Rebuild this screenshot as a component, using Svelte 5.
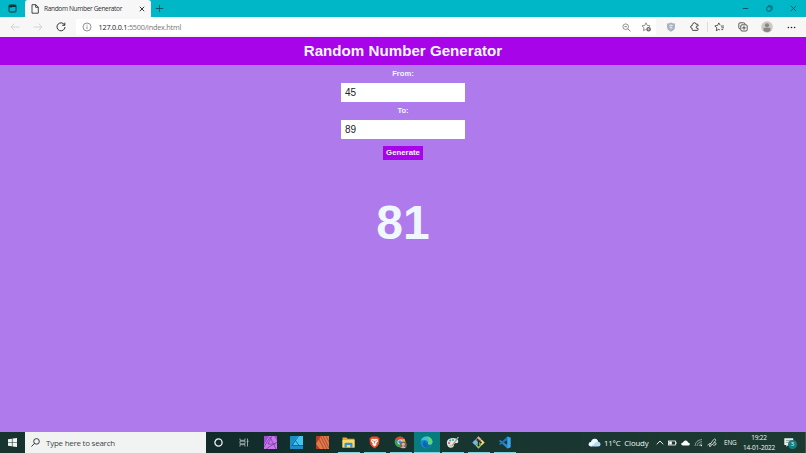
<script>
  let from = $state(45);
  let to = $state(89);
  let result = $state(81);

  const generate = () => {
    const a = Number(from);
    const b = Number(to);
    const min = Math.min(a, b);
    const max = Math.max(a, b);
    result = Math.floor(Math.random() * (max - min + 1)) + min;
  };

  const apps = [
    { name: 'cortana' },
    { name: 'tasks' },
    { name: 'photo' },
    { name: 'designer' },
    { name: 'publisher' },
    { name: 'files', open: true },
    { name: 'brave', open: true },
    { name: 'chrome', open: true },
    { name: 'edge', open: true, active: true },
    { name: 'paint', open: true },
    { name: 'git', open: true },
    { name: 'code', open: true }
  ];
</script>

<div class="screen">
  <div class="titlebar">
    <div class="workspace">
      <svg width="9" height="9" viewBox="0 0 9 9"><rect x="1" y="1" width="7" height="7" rx="1" fill="none" stroke="#06343a" /><path d="M1 2h7M3 3.5v-1" stroke="#06343a" stroke-width="2" /></svg>
    </div>
    <div class="tab">
      <svg width="8" height="10" viewBox="0 0 8 10"><path d="M1 .7h3.8L7.3 3.2v6H1zM4.7.7v2.6h2.6" fill="none" stroke="#333" stroke-width=".9" /></svg>
      <span class="tab-title">Random Number Generator</span>
      <svg width="6" height="6" viewBox="0 0 6 6"><path d="M.8.8l4.4 4.4M5.2.8L.8 5.2" stroke="#222" stroke-width=".9" /></svg>
    </div>
    <div class="new-tab">
      <svg width="9" height="9" viewBox="0 0 9 9"><path d="M4.5.8v7.4M.8 4.5h7.4" stroke="#075159" stroke-width=".9" /></svg>
    </div>
    <div class="window-buttons">
      <span><svg width="7" height="7" viewBox="0 0 7 7"><path d="M.8 3.5h5.4" stroke="#075159" stroke-width=".9" /></svg></span>
      <span><svg width="7" height="7" viewBox="0 0 7 7"><rect x=".8" y="1.8" width="4.3" height="4.3" rx=".8" fill="none" stroke="#075159" stroke-width=".8" /><path d="M2.2.7h2.6q1.5 0 1.5 1.5v2.6" fill="none" stroke="#075159" stroke-width=".7" /></svg></span>
      <span><svg width="7" height="7" viewBox="0 0 7 7"><path d="M.9.9l5.2 5.2M6.1.9L.9 6.1" stroke="#075159" stroke-width=".9" /></svg></span>
    </div>
  </div>

  <div class="toolbar">
    <div class="nav">
      <span><svg width="10" height="8" viewBox="0 0 10 8"><path d="M9.5 4H1M4.4.6L1 4l3.4 3.4" fill="none" stroke="#cfcfcf" stroke-width=".9" /></svg></span>
      <span><svg width="10" height="8" viewBox="0 0 10 8"><path d="M.5 4H9M5.6.6L9 4 5.6 7.4" fill="none" stroke="#cfcfcf" stroke-width=".9" /></svg></span>
      <span><svg width="10" height="10" viewBox="0 0 10 10"><path d="M8.6 3.1A4 4 0 1 0 9 5M8.8.7v2.6H6.2" fill="none" stroke="#333" /></svg></span>
    </div>
    <div class="address">
      <svg width="10" height="10" viewBox="0 0 10 10"><circle cx="5" cy="5" r="4" fill="none" stroke="#777" stroke-width=".8" /><path d="M5 4.4v2.8M5 2.7v.9" stroke="#777" stroke-width=".8" /></svg>
      <span class="url"><b>127.0.0.1</b>:5500/index.html</span>
      <svg class="zoom" width="9" height="9" viewBox="0 0 9 9"><circle cx="3.7" cy="3.7" r="2.8" fill="none" stroke="#777" stroke-width=".8" /><path d="M5.8 5.8l2.7 2.5M2.4 3.7H5" stroke="#777" stroke-width=".9" /></svg>
      <svg width="11" height="10" viewBox="0 0 11 10"><path d="M5 .8l1.2 2.6 2.9.4-1 1M5 .8L3.8 3.4.9 3.8l2.1 2-.5 2.9L4.8 7.5" fill="none" stroke="#777" stroke-width=".8" /><circle cx="7.6" cy="7.2" r="2.3" fill="#666" /><path d="M7.6 6v2.4M6.4 7.2h2.4" stroke="#fff" stroke-width=".5" /></svg>
    </div>
    <div class="tools">
      <span><svg width="10" height="10" viewBox="0 0 10 10"><path d="M5 .5q2 1.2 4 1V5Q9 8 5 9.7 1 8 1 5V1.5q2 .2 4-1z" fill="#a9b2bf" /><path d="M5 2v5.5M3 3.5h4M3.5 5.5h3" stroke="#e5ebf2" stroke-width=".7" /></svg></span>
      <span><svg width="10" height="10" viewBox="0 0 10 10"><path d="M2.8 2.2q.2-1.5 1.6-1.5T6 2.2h1.3q.8 0 .8.8v.9q-2-.1-2 1.3t2 1.3v1q0 .9-.8.9H3q-.8 0-.8-.8V6.4Q.6 6.2.6 4.9t1.6-1.4V3q0-.8.6-.8z" fill="none" stroke="#333" stroke-width=".9" /></svg></span>
      <span class="star"><svg width="11" height="10" viewBox="0 0 11 10"><path d="M7 4h2.9M7.4 5.8h2.5M7.4 7.6h1.8M6.2 3.3L4.8.9 3.5 3.5.8 3.9l2 2-.5 2.8 2.5-1.3 1.1.5" fill="none" stroke="#333" stroke-width=".8" /></svg></span>
      <span><svg width="10" height="10" viewBox="0 0 10 10"><path d="M2.2 7Q.8 7 .8 5.4V2Q.8.8 2 .8h3.5Q7 .8 7 2.2" fill="none" stroke="#333" stroke-width=".8" /><rect x="2.8" y="2.8" width="6.4" height="6.2" rx="1.2" fill="none" stroke="#333" stroke-width=".8" /><path d="M6 4.1v3.6M4.2 5.9h3.6" stroke="#333" stroke-width=".8" /></svg></span>
      <span><svg width="12" height="12" viewBox="0 0 12 12"><circle cx="6" cy="6" r="5.8" fill="#cbc8c6" /><circle cx="6" cy="4.3" r="2.1" fill="#8a8683" /><path d="M2.5 9.8V8q0-1.2 1.2-1.2h4.6Q9.5 6.8 9.5 8v1.8Q6 12.4 2.5 9.8z" fill="#8a8683" /></svg></span>
      <span><svg width="9" height="3" viewBox="0 0 9 3"><circle cx="1.4" cy="1.5" r=".8" fill="#222" /><circle cx="4.5" cy="1.5" r=".8" fill="#222" /><circle cx="7.6" cy="1.5" r=".8" fill="#222" /></svg></span>
    </div>
  </div>

  <main>
    <h1>Random Number Generator</h1>
    <label for="from">From:</label>
    <input id="from" type="text" inputmode="numeric" bind:value={from} />
    <label for="to">To:</label>
    <input id="to" type="text" inputmode="numeric" bind:value={to} />
    <button onclick={generate}>Generate</button>
    <p class="result">{result}</p>
  </main>

  <footer class="taskbar">
    <div class="start">
      <svg width="9" height="9" viewBox="0 0 9 9"><path d="M0 1.3L3.9.7v3.5H0zM4.5.6L9 0v4.2H4.5zM0 4.8h3.9v3.5L0 7.7zM4.5 4.8H9V9l-4.5-.6z" fill="#f2f5f4" /></svg>
    </div>
    <div class="search">
      <svg width="9" height="9" viewBox="0 0 9 9"><circle cx="5.5" cy="3.4" r="2.8" fill="none" stroke="#222" stroke-width=".9" /><path d="M3.5 5.4L.5 8.5" stroke="#222" stroke-width=".9" /></svg>
      <span>Type here to search</span>
    </div>
    <div class="apps">
      {#each apps as app (app.name)}
        <div class="app" class:open={app.open} class:active={app.active}>
          <svg width="13" height="13" viewBox="0 0 13 13">
            {#if app.name === 'cortana'}
              <circle cx="6.5" cy="6.5" r="3.6" fill="none" stroke="#f2f5f4" stroke-width="1.3" />
            {:else if app.name === 'tasks'}
              <path d="M2 2.5v1.8h5V2.5M2 10.5V8.7h5v1.8M2 5.2v2.6h5V5.2zM9.5 2.5v2M9.5 6v4.5" fill="none" stroke="#b7c3c0" stroke-width=".8" /><path d="M8.8 5.2h1.6" stroke="#fff" />
            {:else if app.name === 'photo'}
              <rect width="13" height="13" rx=".5" fill="#c779ec" /><path d="M0 0h5L0 9zM10 0h3v5z" fill="#a04fd0" /><path d="M0 11L6 1l6 12M2 13l11-7M8 0L4 8h8" fill="none" stroke="#7b35a8" stroke-width=".7" />
            {:else if app.name === 'designer'}
              <rect width="13" height="13" rx=".5" fill="#1b8dcb" /><path d="M7.5 0H13v9H2.5z" fill="#45c4ef" /><path d="M8.5 0L2.2 9.5H13M5.5 4.5L9 9.5" fill="none" stroke="#105a91" stroke-width=".8" />
            {:else if app.name === 'publisher'}
              <rect width="13" height="13" rx=".5" fill="#b43d24" /><path d="M0 8L5 0h8v13H4z" fill="#e07a4b" /><path d="M3 3l5 10M5 1l6 12M7 0l6 12M10 0l3 6" stroke="#9a3a22" stroke-width=".7" />
            {:else if app.name === 'files'}
              <path d="M.5 1.5h4l1 1.2h7v8.8H.5z" fill="#e9a928" /><path d="M.5 4h12v7.5H.5z" fill="#ffda68" /><path d="M2.5 11.8V7.7q0-1 1-1h6q1 0 1 1v4.1H8.3V9H4.7v2.8z" fill="#3594cd" />
            {:else if app.name === 'brave'}
              <path d="M3.7.5h5.6l1.2 1.3 1 .1-.4 5.6Q10.2 10.6 6.5 12.5 2.8 10.6 1.9 7.5L1.5 1.9l1-.1z" fill="#f04b27" /><path d="M3.5 3l2-.2 1 .5 1-.5 2 .2.6 2-2 2.7.5 1-2.1 1.7-2.1-1.7.5-1-2-2.7z" fill="#fff" /><path d="M4.2 4.6l1.6.6M8.8 4.6l-1.6.6M6.5 5v2.5" stroke="#f04b27" stroke-width=".8" />
            {:else if app.name === 'chrome'}
              <circle cx="6" cy="6" r="5.4" fill="#3ca253" /><path d="M1.3 3.3A5.4 5.4 0 0 1 10.7 3.3L6 6.4z" fill="#df4537" /><path d="M10.7 3.3A5.4 5.4 0 0 1 6 11.4V6l.3-2.7z" fill="#e9bb3b" /><circle cx="6" cy="6" r="2.5" fill="#e8f0fa" /><circle cx="6" cy="6" r="1.8" fill="#4389ec" /><circle cx="9.3" cy="9" r="3.5" fill="#856257" /><circle cx="9.3" cy="8.2" r="1.5" fill="#e1b8a0" /><path d="M7 11.8q2-3 4.7 0z" fill="#d7d7d7" />
            {:else if app.name === 'edge'}
              <circle cx="6.5" cy="6.5" r="6" fill="#1685d3" /><path d="M.8 5Q2 .5 6.5.5q5.3 0 6 5.6Q12 9 9.3 8.8 7.7 8.6 8 7q0-3-3.6-3Q2 4 .8 5z" fill="#35c5cf" /><path d="M7 .5q5 .6 5.5 5.6Q12 9 9.3 8.8 7.7 8.6 8 7q2.5-2-1-6.5z" fill="#65d66d" /><path d="M7.8 6.2Q7 7.6 8.2 8.6q1.6 1 3.8-.2-.8 1.6-2 2.3-3 .3-4-2.2-.4-2.3 1.8-2.3z" fill="#087b7e" /><path d="M4.5 5Q1.5 8 4 10.5q2.6 2.4 6 .2-2.8.3-4-1.9-.8-1.9.2-3.1z" fill="#0f62b4" />
            {:else if app.name === 'paint'}
              <path d="M1 8Q0 3.5 5 2.2q5-1 7 2 1 3-2 3-2-.5-2 1.5-.2 3-3.2 3Q1.6 11.5 1 8z" fill="#dce8ee" /><circle cx="3" cy="7" r="1" fill="#e6513f" /><circle cx="4.2" cy="4.6" r="1" fill="#3992dd" /><circle cx="7" cy="3.9" r="1" fill="#56ac52" /><circle cx="4.5" cy="9.4" r="1" fill="#eabd3a" /><path d="M12 .7L6.2 8.4l-1 2 2-.7L12.7 1.5z" fill="#ce9564" /><path d="M9 4.7l1 .9 2.7-4.1-.7-.8z" fill="#85a9b9" />
            {:else if app.name === 'git'}
              <path d="M6.5.3l3 3-3 3-3-3z" fill="#e9ae9d" /><path d="M3.4 3.4l3 3.1-3 3L.3 6.5z" fill="#76b7df" /><path d="M9.6 3.4l3.1 3.1-3.1 3-3.1-3z" fill="#f0de70" /><path d="M6.5 6.6l3 3-3 3.1-3-3.1z" fill="#94cd75" /><path d="M4.5 2.5l4 4M6.5 4.5v5" stroke="#242b2b" stroke-width="1.1" /><circle cx="6.5" cy="4.5" r="1.1" fill="#242b2b" /><circle cx="8.7" cy="6.6" r="1.1" fill="#242b2b" /><circle cx="6.5" cy="9.3" r="1.1" fill="#242b2b" />
            {:else}
              <path d="M9.4.4l3.1 1.3v9.6l-3.1 1.3L1 4.9l1.1-1 7.3 5.2z" fill="#2489ce" /><path d="M1 8.1l8.4-7.7v3.5L2.1 9.1z" fill="#1b75bb" /><path d="M9.4.4l3.1 1.3v9.6l-3.1 1.3z" fill="#38a6ed" />
            {/if}
          </svg>
        </div>
      {/each}
    </div>
    <div class="tray">
      <svg width="13" height="9" viewBox="0 0 13 9"><path d="M3.5 8.5Q.6 8.4.6 6.2T3 4Q3.7.5 7 .7q2.7.2 3.2 3 2.4.2 2.4 2.5T10 8.5z" fill="#b5dcf5" /><path d="M5 1.5Q8-.4 9.7 2.7l.5 1Q7 3.4 6 6.5 3.4 7 3.5 8.5 1 8.2.6 6.2 1 4.2 3 4z" fill="#edf8ff" /></svg>
      <span class="weather">11°C&nbsp; Cloudy</span>
      <svg class="chevron" width="8" height="5" viewBox="0 0 8 5"><path d="M.8 4.3L4 1l3.2 3.3" fill="none" stroke="#fff" stroke-width=".9" /></svg>
      <svg class="battery" width="9" height="6" viewBox="0 0 9 6"><rect x=".5" y="1" width="7" height="4" fill="none" stroke="#fff" stroke-width=".8" /><path d="M1.2 1.5h2.6v3H1.2zM7.8 2.2h.8v1.6h-.8z" fill="#fff" /></svg>
      <svg class="drive" width="9" height="6" viewBox="0 0 9 6"><path d="M2 5.5Q.2 5.4.2 4T2 2.5Q3 .3 4.8.6 6.5.8 7 2.5q1.8 0 1.8 1.5T7.2 5.5z" fill="#fff" /></svg>
      <svg class="wifi" width="9" height="9" viewBox="0 0 9 9"><path d="M1 8Q1.3 2.3 8 1.5M3 8Q3.3 4.3 8 3.6M5 8Q5.4 6 8 5.7" fill="none" stroke="#a6b3af" stroke-width=".8" /><circle cx="7.3" cy="7.5" r=".8" fill="#fff" /></svg>
      <svg class="pen" width="10" height="10" viewBox="0 0 10 10"><path d="M.6 7.4Q2 5 3.6 5.6t0 2.8q-1.8.8-1-1.4L6.8 1.4q.9-.8 1.6 0t0 1.5L4.8 7.2M6.2 7.2q3 .4 2.9-1.4T7 4.8" fill="none" stroke="#e4eae8" stroke-width=".8" /></svg>
      <span class="lang">ENG</span>
      <div class="clock"><span>19:22</span><span>14-01-2022</span></div>
      <div class="notice">
        <svg width="10" height="9" viewBox="0 0 10 9"><path d="M.3.3h8.9v6.6H4.2L2.3 8.8V6.9h-2z" fill="#eef3f1" /><path d="M1.8 2.4h6M1.8 4.4h4" stroke="#70837e" stroke-width=".7" /></svg>
        <span class="badge">3</span>
      </div>
    </div>
  </footer>
</div>

<style>
  :global(body) {
    margin: 0;
    overflow: hidden;
  }

  .screen {
    display: flex;
    flex-direction: column;
    width: 806px;
    height: 453px;
    font-family: 'Open Sans', 'Noto Sans', sans-serif;
  }

  svg {
    display: block;
    flex: none;
  }

  .titlebar {
    display: flex;
    align-items: center;
    height: 17px;
    background: #00b7c7;
  }

  .workspace {
    display: flex;
    justify-content: center;
    width: 25px;
  }

  .tab {
    display: flex;
    align-items: center;
    box-sizing: border-box;
    width: 126px;
    height: 17px;
    padding: 0 6px 0 6px;
    border-radius: 3px 3px 0 0;
    background: #f7f7f7;
  }

  .tab-title {
    flex: 1;
    margin-left: 5px;
    font-size: 6.6px;
    letter-spacing: -0.37px;
    line-height: 17px;
    white-space: nowrap;
    color: #333;
  }

  .new-tab {
    margin-left: 4px;
  }

  .window-buttons {
    display: flex;
    margin-left: auto;
  }

  .window-buttons span {
    display: flex;
    justify-content: center;
    width: 24.3px;
  }

  .toolbar {
    display: flex;
    align-items: center;
    height: 20px;
    background: #f7f7f7;
  }

  .nav {
    display: flex;
    padding-left: 3px;
  }

  .nav span {
    display: flex;
    align-items: center;
    justify-content: center;
    width: 23px;
  }

  .address {
    display: flex;
    align-items: center;
    box-sizing: border-box;
    width: 580px;
    height: 16px;
    margin-left: 4px;
    padding: 0 4px 0 6px;
    border-radius: 2px;
    background: #fff;
  }

  .url {
    margin-left: 6.5px;
    font-size: 7.3px;
    letter-spacing: -0.23px;
    line-height: 16px;
    color: #777;
  }

  .url b {
    font-weight: 400;
    color: #222;
  }

  .zoom {
    margin-left: auto;
    margin-right: 10px;
  }

  .tools {
    display: flex;
    align-items: center;
    padding-left: 3px;
  }

  .tools span {
    display: flex;
    align-items: center;
    justify-content: center;
    width: 24px;
    height: 10px;
  }

  .tools .star {
    box-sizing: border-box;
    border-left: 1px solid #ddd;
  }

  main {
    display: flex;
    flex-direction: column;
    align-items: center;
    height: 395px;
    background: #ae7aec;
    font-family: 'Liberation Sans', Arial, sans-serif;
    color: #f0f8ff;
  }

  h1 {
    box-sizing: border-box;
    width: 100%;
    height: 28px;
    margin: 0 0 3px;
    border-top: 1px solid #9310cc;
    background: #a804e9;
    font-size: 15.15px;
    line-height: 26px;
    text-align: center;
  }

  label {
    height: 12px;
    font-size: 7.6px;
    font-weight: bold;
    line-height: 12px;
  }

  input {
    box-sizing: border-box;
    width: 124px;
    height: 19px;
    margin: 3px 0;
    padding: 0 4px;
    border: none;
    background: #fff;
    font: 10px 'Liberation Sans', Arial, sans-serif;
    color: #222;
  }

  button {
    width: 40px;
    height: 14px;
    margin-top: 4px;
    padding: 0;
    border: none;
    background: #a804e9;
    font: bold 7.8px/14px 'Liberation Sans', Arial, sans-serif;
    color: #f0f8ff;
  }

  .result {
    margin: 35px 0 0;
    font-size: 48px;
    font-weight: bold;
    line-height: 56px;
  }

  .taskbar {
    display: flex;
    height: 21px;
    background: linear-gradient(90deg, #17342f 0, #102b2a 205px, #17342f 430px, #1d3a32 100%);
  }

  .start {
    display: flex;
    align-items: center;
    justify-content: center;
    width: 25px;
  }

  .search {
    display: flex;
    align-items: center;
    gap: 6px;
    box-sizing: border-box;
    width: 181px;
    padding-left: 6px;
    background: #f1f3f2;
    font-size: 8px;
    letter-spacing: -0.25px;
    color: #444;
  }

  .apps {
    display: flex;
  }

  .app {
    display: flex;
    align-items: center;
    box-sizing: border-box;
    width: 26px;
    height: 21px;
    padding-left: 6px;
  }

  .app.open {
    background: linear-gradient(#7bd4dc, #7bd4dc) center bottom / 22px 1px no-repeat;
  }

  .app.active {
    background: linear-gradient(#7bd4dc, #7bd4dc) center bottom / 26px 1px no-repeat #087b7e;
  }

  .tray {
    display: flex;
    align-items: center;
    flex: 1;
    box-sizing: border-box;
    padding-left: 70px;
    border-right: 1px solid #41574f;
    font-size: 7.8px;
    letter-spacing: -0.15px;
    white-space: nowrap;
    color: #f2f5f4;
  }

  .weather {
    width: 45px;
    margin-left: 3px;
  }

  .chevron {
    margin-left: 7px;
  }

  .battery {
    margin-left: 4px;
  }

  .drive,
  .wifi {
    margin-left: 4px;
  }

  .pen {
    margin-left: 4px;
  }

  .lang {
    width: 13px;
    margin-left: 7px;
    font-size: 6.4px;
  }

  .clock {
    display: flex;
    flex-direction: column;
    align-items: center;
    width: 34px;
    margin-left: 5px;
    font-size: 6.5px;
    letter-spacing: -0.2px;
    line-height: 9.5px;
  }

  .notice {
    position: relative;
    margin-left: 8px;
  }

  .badge {
    position: absolute;
    top: 2px;
    left: 4px;
    width: 9px;
    height: 9px;
    border-radius: 50%;
    background: #147f83;
    font-size: 6px;
    line-height: 9px;
    text-align: center;
  }
</style>
